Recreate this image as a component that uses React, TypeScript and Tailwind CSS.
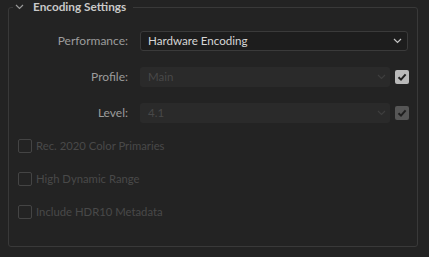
import React from "react";

const font = { fontFamily: "Lato, 'Noto Sans', sans-serif" };

function Chevron({ color, className }: { color: string; className?: string }) {
  return (
    <svg width="9" height="6" viewBox="0 0 9 6" className={className}>
      <path d="M1 1 L4.5 4.5 L8 1" fill="none" stroke={color} strokeWidth="1.2" />
    </svg>
  );
}

function Check({ bg }: { bg: string }) {
  return (
    <div className={`w-[14px] h-[14px] rounded-[2px] flex items-center justify-center ${bg}`}>
      <svg width="12" height="12" viewBox="0 0 12 12">
        <path d="M2.5 6.2 L5 8.6 L9.6 3.4" fill="none" stroke="#1e1e1e" strokeWidth="2" />
      </svg>
    </div>
  );
}

function Row({ label, value, checkBg }: { label: string; value: string; checkBg: string }) {
  return (
    <div className="flex items-center h-[20px]">
      <div className="w-[119px] text-right text-[12px] text-[#9c9c9c]">{label}</div>
      <div className="ml-[12px] w-[250px] h-[20px] rounded-[3px] bg-[#2a2a2a] flex items-center justify-between pl-[8px] pr-[4px]">
        <span className="text-[11.5px] text-[#484848]">{value}</span>
        <Chevron color="#3e3e3e" />
      </div>
      <div className="ml-[5px]">
        <Check bg={checkBg} />
      </div>
    </div>
  );
}

function Box({ label }: { label: string }) {
  return (
    <div className="flex items-center h-[20px] pl-[9px]">
      <div className="w-[14px] h-[14px] rounded-[2px] border-[1.5px] border-[#444444]" />
      <span className="ml-[4px] text-[11.3px] text-[#494949]">{label}</span>
    </div>
  );
}

export default function App() {
  return (
    <div className="w-[429px] h-[257px] bg-[#232323] overflow-hidden" style={font}>
      <fieldset className="ml-[8px] w-[410px] h-[247px] border border-[#393939] rounded-[3px]">
        <legend className="ml-[4px] px-[2px] h-[14px] flex items-center">
          <Chevron color="#9a9a9a" className="" />
          <span className="ml-[9px] mr-[5px] text-[11.8px] font-bold text-[#c9c9c9] leading-[14px]">
            Encoding Settings
          </span>
        </legend>
        <div className="pt-[17px] flex flex-col">
          <div className="flex items-center h-[20px]">
            <div className="w-[119px] text-right text-[12px] text-[#9c9c9c]">Performance:</div>
            <div className="ml-[12px] w-[268px] h-[20px] rounded-[3px] bg-[#1d1d1d] border border-[#3a3a3a] flex items-center justify-between pl-[7px] pr-[5px]">
              <span className="text-[11.6px] text-[#d6d6d6]">Hardware Encoding</span>
              <Chevron color="#c4c4c4" />
            </div>
          </div>
          <div className="mt-[16px]">
            <Row label="Profile:" value="Main" checkBg="bg-[#b9b9b9]" />
          </div>
          <div className="mt-[16px]">
            <Row label="Level:" value="4.1" checkBg="bg-[#565656]" />
          </div>
          <div className="mt-[13px] flex flex-col gap-[13px]">
            <Box label="Rec. 2020 Color Primaries" />
            <Box label="High Dynamic Range" />
            <Box label="Include HDR10 Metadata" />
          </div>
        </div>
      </fieldset>
    </div>
  );
}
